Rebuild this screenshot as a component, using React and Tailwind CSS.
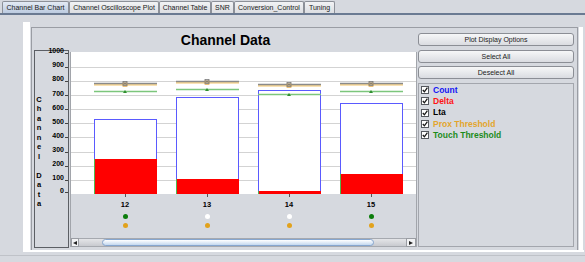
import React from "react";

const tabs = [
  { label: "Channel Bar Chart", w: "w-[67px]", active: true },
  { label: "Channel Oscilloscope Plot", w: "w-[90px]" },
  { label: "Channel Table", w: "w-[52px]" },
  { label: "SNR", w: "w-[23px]" },
  { label: "Conversion_Control", w: "w-[70px]" },
  { label: "Tuning", w: "w-[31px]" },
];

const channels = [
  { id: 12, count: 531, delta: 248, lta: 786, touch: 729, touchOn: true },
  { id: 13, count: 686, delta: 106, lta: 800, touch: 743, touchOn: false },
  { id: 14, count: 736, delta: 21, lta: 778, touch: 708, touchOn: false },
  { id: 15, count: 644, delta: 142, lta: 786, touch: 729, touchOn: true },
];

const series = [
  { label: "Count", color: "text-[#1414f5]" },
  { label: "Delta", color: "text-[#ff1414]" },
  { label: "Lta", color: "text-black" },
  { label: "Prox Threshold", color: "text-[#e3a52c]" },
  { label: "Touch Threshold", color: "text-[#1c8c1c]" },
];

const ticks = [1000, 900, 800, 700, 600, 500, 400, 300, 200, 100, 0];
const Y = (v) => 142 - v * 0.1413;

const CheckBox = () => (
  <svg width="8" height="8" viewBox="0 0 8 8" className="shrink-0">
    <rect x="0.5" y="0.5" width="7" height="7" fill="#fff" stroke="#55585e" />
    <path d="M1.8 4 L3.4 5.8 L6.4 1.6" fill="none" stroke="#1a1a1a" strokeWidth="1.3" />
  </svg>
);

const PlotArea = () => (
  <svg width="345" height="142" className="block bg-white">
    {[100, 200, 300, 400, 500, 600, 700, 800, 900].map((v) => (
      <line key={v} x1="0" x2="345" y1={Math.round(Y(v)) + 0.5} y2={Math.round(Y(v)) + 0.5} stroke="#d3d3d3" />
    ))}
    {channels.map((c, i) => {
      const x = 23 + i * 82;
      const cx = x + 31;
      const ly = Math.round(Y(c.lta)) + 0.5;
      const ty = Math.round(Y(c.touch)) + 0.5;
      const ct = Math.round(Y(c.count)) + 0.5;
      const dt = Math.round(Y(c.delta));
      return (
        <g key={c.id}>
          <rect x={x + 0.5} y={ct} width="62" height={142 - ct} fill="#fff" stroke="#5a5aff" />
          <rect x={x} y={dt} width="63" height={142 - dt} fill="#ff0000" />
          <line x1={x + 0.5} x2={x + 0.5} y1={dt} y2="142" stroke="#4fb84f" />
          <line x1={x} x2={x + 63} y1={ly + 1.4} y2={ly + 1.4} stroke="#f3c66c" strokeWidth="1.4" />
          <line x1={x} x2={x + 63} y1={ly} y2={ly} stroke="#8a8a8a" strokeWidth="1.4" />
          <line x1={x} x2={x + 63} y1={ty} y2={ty} stroke="#7cc67c" strokeWidth="1.4" />
          <rect x={cx - 2} y={ly - 0.5} width="4" height="3.5" fill="none" stroke="#e8b25a" strokeWidth="0.8" />
          <rect x={cx - 2} y={ly - 2} width="4" height="4" fill="none" stroke="#7a7a7a" strokeWidth="0.8" />
          <path d={`M${cx - 1.5} ${ly - 1.5} L${cx + 1.5} ${ly + 1.5} M${cx + 1.5} ${ly - 1.5} L${cx - 1.5} ${ly + 1.5}`} stroke="#6a6a6a" strokeWidth="0.7" />
          <polygon points={`${cx - 2},${ty + 1.5} ${cx + 2},${ty + 1.5} ${cx},${ty - 1.5}`} fill="#2f8f2f" />
        </g>
      );
    })}
  </svg>
);

export default function App() {
  return (
    <div className="w-[585px] h-[262px] overflow-hidden bg-[#d6d9df] font-['Liberation_Sans',Arial,sans-serif] text-[#1a1a1a] flex flex-col">
      {/* tab strip */}
      <div className="flex h-[15px] shrink-0 items-end border-b-2 border-[#6a7a92] pl-[2px]">
        {tabs.map((t) => (
          <div
            key={t.label}
            className={`${t.w} h-[12px] flex items-center justify-center rounded-t-[2px] border border-b-0 border-[#8c9098] text-[7px] leading-none whitespace-nowrap ${
              t.active ? "bg-gradient-to-b from-[#e3eaf4] to-[#bccbe0]" : "bg-gradient-to-b from-[#f2f3f5] to-[#dcdee2]"
            }`}
          >
            {t.label}
          </div>
        ))}
      </div>

      {/* frame */}
      <div className="ml-[23px] mt-[7px] flex h-[230px] w-[561px] shrink-0 border-b-2 border-l-[7px] border-white">
        <div className="ml-px mt-[5px] flex flex-1">
          <div className="flex w-[547px] border border-b-0 border-[#9a9da4] pl-[2px]">
            {/* chart column */}
            <div className="flex w-[383px] flex-col">
              <div className="flex h-[22px] items-center justify-center pt-[3px] text-[14px] font-bold text-black">
                Channel Data
              </div>
              <div className="flex">
                {/* range axis */}
                <div className="flex h-[198px] w-[36px] border border-[#5c5f65]">
                  <div className="flex w-[7px] flex-col items-center justify-center pl-px pt-[5px] text-[7.5px] font-bold leading-[9.5px] text-black">
                    {"Channel Data".split("").map((ch, i) => (
                      <div key={i} className="h-[9.5px]">{ch === " " ? "\u00a0" : ch}</div>
                    ))}
                  </div>
                  <div className="relative flex-1">
                    {ticks.map((v) => {
                      const c = v === 0 ? 139.5 : Y(v) - 0.5;
                      return (
                        <React.Fragment key={v}>
                          <span
                            className="absolute right-[4px] text-[7px] font-bold leading-[8px] text-black"
                            style={{ top: c - 4 }}
                          >
                            {v}
                          </span>
                          <span className="absolute right-0 h-px w-[3px] bg-[#444]" style={{ top: Math.round(c + 1.5) }} />
                        </React.Fragment>
                      );
                    })}
                  </div>
                </div>

                {/* scroll pane */}
                <div className="ml-px mt-[2px] flex h-[195px] w-[347px] flex-col border-x border-[#a2a5ab]">
                  <PlotArea />
                  <div className="flex h-[44px] pl-[13px]">
                    {channels.map((c) => (
                      <div key={c.id} className="flex w-[82px] flex-col items-center">
                        <div className="h-[3px] w-px bg-[#555]" />
                        <div className="mt-[4px] text-[7.5px] font-bold leading-[8px] text-black">{c.id}</div>
                        <div
                          className={`mt-[5px] h-[5px] w-[5px] rounded-full ${
                            c.touchOn ? "bg-[#0c7d0c]" : "bg-white"
                          }`}
                        />
                        <div className="mt-[4px] h-[5px] w-[5px] rounded-full bg-[#e2a21c]" />
                      </div>
                    ))}
                  </div>
                  {/* horizontal scrollbar */}
                  <div className="flex h-[9px]">
                    <div className="flex w-[8px] items-center justify-center border border-[#9a9da3] bg-[#f1f2f4]">
                      <svg width="4" height="4" viewBox="0 0 4 4"><polygon points="0,2 4,0 4,4" fill="#222" /></svg>
                    </div>
                    <div className="flex flex-1 items-stretch border-y border-[#a6a9af] bg-gradient-to-b from-[#e4e5e8] to-[#c8cacf]">
                      <div className="ml-[23px] w-[272px] rounded-[4px] border border-[#86a6cf] bg-gradient-to-b from-white to-[#c4d8ef]" />
                    </div>
                    <div className="flex w-[10px] items-center justify-center border border-[#9a9da3] bg-[#f1f2f4]">
                      <svg width="4" height="4" viewBox="0 0 4 4"><polygon points="4,2 0,0 0,4" fill="#222" /></svg>
                    </div>
                  </div>
                </div>
              </div>
            </div>

            {/* options column */}
            <div className="ml-px flex w-[156px] flex-col pt-[5px]">
              {["Plot Display Options", "Select All", "Deselect All"].map((b) => (
                <div
                  key={b}
                  className="mb-[3.5px] flex h-[13px] items-center justify-center rounded-[3px] border border-[#8b8e95] bg-gradient-to-b from-[#f6f7f8] to-[#dadce1] text-[7px] leading-none"
                >
                  {b}
                </div>
              ))}
              <div className="mb-[3px] flex-1 border border-[#a3a6ad] pt-px">
                {series.map((s) => (
                  <div key={s.label} className="flex h-[11.3px] items-center gap-[4px] pl-[2px]">
                    <CheckBox />
                    <span className={`text-[8.5px] font-bold leading-none ${s.color}`}>{s.label}</span>
                  </div>
                ))}
              </div>
            </div>
          </div>
          <div className="ml-px w-[4px] bg-white" />
        </div>
      </div>

      <div className="mt-[3px] border-t border-[#bfc2c8]" />
    </div>
  );
}
